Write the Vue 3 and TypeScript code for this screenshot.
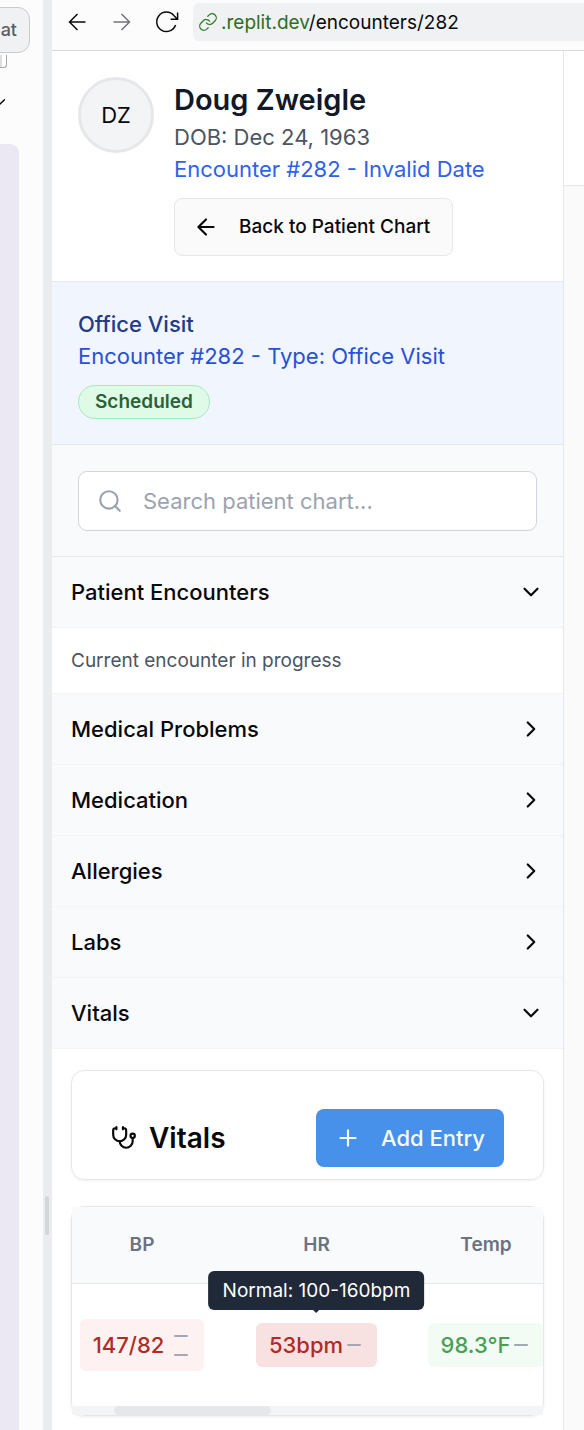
<script setup lang="ts">
import { ref } from 'vue'

interface Section {
  id: string
  title: string
  open: boolean
}

const query = ref('')
const sections = ref<Section[]>([
  { id: 'encounters', title: 'Patient Encounters', open: true },
  { id: 'problems', title: 'Medical Problems', open: false },
  { id: 'medication', title: 'Medication', open: false },
  { id: 'allergies', title: 'Allergies', open: false },
  { id: 'labs', title: 'Labs', open: false },
  { id: 'vitals', title: 'Vitals', open: true },
])

function toggle(section: Section) {
  section.open = !section.open
}
</script>

<template>
  <div class="workspace">
    <aside class="chat-pane">
      <button class="chat-tab" type="button">at</button>
      <span class="keycap"></span>
      <svg class="pane-chevron" viewBox="0 0 12 8">
        <path d="M1 1.500 5.500 6.500 11.500 0.800" />
      </svg>
      <div class="chat-bubble"></div>
    </aside>
    <div class="divider"><span class="grip"></span></div>

    <div class="preview">
      <header class="browser-bar">
        <button class="nav" type="button" aria-label="Back">
          <svg viewBox="0 0 24 24"><path d="M20.500 12H4.500M12.500 4l-8 8 8 8" /></svg>
        </button>
        <button class="nav muted" type="button" aria-label="Forward">
          <svg viewBox="0 0 24 24"><path d="M3.500 12h16M11.500 4l8 8-8 8" /></svg>
        </button>
        <button class="nav reload" type="button" aria-label="Reload">
          <svg viewBox="0 0 24 24"><path d="M20.600 15a9.700 9.700 0 1 1-1.800-9.500L22.200 9M22.600 2.500V9.300h-7" /></svg>
        </button>
        <div class="address">
          <svg viewBox="0 0 24 24">
            <path d="M10 13a5 5 0 0 0 7.540.540l3-3a5 5 0 0 0-7.070-7.070l-1.720 1.710" />
            <path d="M14 11a5 5 0 0 0-7.540-.540l-3 3a5 5 0 0 0 7.070 7.070l1.710-1.710" />
          </svg>
          <span class="url"><span class="host">.replit.dev</span>/encounters/282</span>
        </div>
      </header>

      <div class="app">
        <main class="chart">
          <section class="patient">
            <div class="avatar">DZ</div>
            <div class="patient-info">
              <h1>Doug Zweigle</h1>
              <p class="dob">DOB: Dec 24, 1963</p>
              <p class="encounter-date">Encounter #282 - Invalid Date</p>
              <button class="back" type="button">
                <svg viewBox="0 0 24 24"><path d="m12 19-7-7 7-7M19 12H5" /></svg>
                Back to Patient Chart
              </button>
            </div>
          </section>

          <section class="visit">
            <h2>Office Visit</h2>
            <p>Encounter #282 - Type: Office Visit</p>
            <span class="status">Scheduled</span>
          </section>

          <div class="search">
            <label class="search-box">
              <svg viewBox="0 0 24 24"><circle cx="11" cy="11" r="8" /><path d="m21 21-4.300-4.300" /></svg>
              <input v-model="query" type="text" aria-label="Search patient chart" placeholder="Search patient chart..." />
            </label>
          </div>

          <template v-for="section in sections" :key="section.id">
            <button class="section-head" type="button" :aria-expanded="section.open" @click="toggle(section)">
              {{ section.title }}
              <svg viewBox="0 0 24 24">
                <path :d="section.open ? 'm6 9 6 6 6-6' : 'm9 18 6-6-6-6'" />
              </svg>
            </button>
            <p v-if="section.open && section.id === 'encounters'" class="progress">Current encounter in progress</p>
            <div v-if="section.open && section.id === 'vitals'" class="vitals">
              <div class="vitals-card">
                <svg class="stethoscope" viewBox="0 0 24 24">
                  <path d="M11 2v2M5 2v2M5 3H4a2 2 0 0 0-2 2v4a6 6 0 0 0 12 0V5a2 2 0 0 0-2-2h-1" />
                  <path d="M8 15a6 6 0 0 0 12 0v-3" />
                  <circle cx="20" cy="10" r="2" />
                </svg>
                <h3>Vitals</h3>
                <button class="add" type="button">
                  <svg viewBox="0 0 24 24"><path d="M5 12h14M12 5v14" /></svg>
                  Add Entry
                </button>
              </div>

              <div class="table-card">
                <div class="table-scroll">
                  <table>
                    <colgroup>
                      <col class="col-bp" />
                      <col class="col-hr" />
                      <col class="col-temp" />
                    </colgroup>
                    <thead>
                      <tr>
                        <th>BP</th>
                        <th>HR</th>
                        <th>Temp</th>
                      </tr>
                    </thead>
                    <tbody>
                      <tr>
                        <td>
                          <span class="reading high tall">147/82 <span class="trends"><i></i><i></i></span></span>
                        </td>
                        <td>
                          <span class="reading alert">53bpm<i></i>
                            <span class="tooltip" role="tooltip">Normal: 100-160bpm</span>
                          </span>
                        </td>
                        <td><span class="reading ok">98.3°F<i></i></span></td>
                      </tr>
                    </tbody>
                  </table>
                  <div class="scrollbar"><span class="thumb"></span></div>
                </div>
              </div>
            </div>
          </template>
        </main>
        <div class="side">
          <div class="side-head"></div>
        </div>
      </div>
    </div>
  </div>
</template>

<style>
body {
  margin: 0;
}
</style>

<style scoped>
* {
  box-sizing: border-box;
}

.workspace {
  display: flex;
  min-height: 100vh;
  background: #fcfcfc;
  font-family: Inter, "Liberation Sans", sans-serif;
  font-size: 22px;
  line-height: 32px;
  color: #09090b;
  overflow: hidden;
}

h1,
h2,
h3,
p {
  margin: 0;
  font-size: inherit;
  font-weight: 400;
}

button {
  font: inherit;
  color: inherit;
  margin: 0;
  cursor: pointer;
}

svg {
  display: block;
  flex: none;
  fill: none;
  stroke: currentColor;
  stroke-width: 2;
  stroke-linecap: round;
  stroke-linejoin: round;
}

.chat-pane {
  width: 43px;
  flex: none;
  display: flex;
  flex-direction: column;
  align-items: flex-start;
  overflow: hidden;
}

.chat-tab {
  display: flex;
  justify-content: flex-end;
  align-items: center;
  align-self: flex-end;
  width: 80px;
  height: 46px;
  margin: 7px 13px 0 0;
  padding: 0 12px 0 0;
  border: 1px solid #c9cbcf;
  border-radius: 12px;
  background: #f0f1f3;
  color: #5a5d66;
  font-size: 18px;
  font-weight: 500;
}

.keycap {
  width: 7px;
  height: 13px;
  margin-top: 2px;
  border: solid #a5a7aa;
  border-width: 0 1px 1px 0;
  border-radius: 0 0 3px 0;
  background: linear-gradient(90deg, #dcdddf 2px, #fff 2px);
}

.pane-chevron {
  width: 12px;
  height: 8px;
  margin: 31px 0 0 -7px;
  stroke-width: 1.500;
}

.chat-bubble {
  flex: 1;
  width: 19px;
  margin-top: 37px;
  border-top-right-radius: 9px;
  background: #ebe8f4;
}

.divider {
  display: flex;
  flex-direction: column;
  width: 9px;
  flex: none;
  padding-top: 1196px;
  background: #ebeced;
}

.grip {
  width: 4px;
  height: 39px;
  margin-left: 2px;
  border-radius: 2px;
  background: #d5d6d8;
}

.preview {
  flex: 1;
  min-width: 0;
  display: flex;
  flex-direction: column;
}

.browser-bar {
  display: flex;
  align-items: flex-start;
  height: 51px;
  padding: 3px 0 0 13px;
  border-bottom: 1px solid #d9dadc;
}

.nav {
  display: grid;
  place-items: center;
  width: 24px;
  height: 38px;
  margin-right: 21px;
  padding: 0;
  border: 0;
  background: none;
}

.nav svg {
  width: 24px;
  height: 24px;
  stroke-width: 1.500;
  stroke-linecap: butt;
  stroke-linejoin: miter;
}

.nav.muted {
  color: #70737a;
}

.nav.reload {
  margin-right: 14px;
}

.address {
  display: flex;
  align-items: center;
  flex: 1;
  min-width: 0;
  height: 38px;
  padding-left: 5px;
  border-radius: 6px 0 0 6px;
  background: #f0f1f3;
  font-size: 19px;
  white-space: nowrap;
}

.address svg {
  width: 20px;
  height: 20px;
  margin-right: 3px;
  color: #317a2b;
  stroke-width: 1.500;
}

.url {
  padding-top: 2px;
}

.host {
  color: #2d6e1f;
}

.app {
  display: flex;
  flex: 1;
}

.chart {
  flex: 1;
  min-width: 0;
  background: #fff;
}

.side {
  width: 21px;
  flex: none;
  border-left: 1px solid #e5e7eb;
  background: #fafafa;
}

.side-head {
  height: 135px;
  border-bottom: 1px solid #e5e7eb;
  background: #fff;
}

.patient {
  display: flex;
  gap: 20px;
  padding: 26px 26px 25px;
  border-bottom: 1px solid #e5e7eb;
}

.avatar {
  display: grid;
  place-items: center;
  width: 76px;
  height: 76px;
  flex: none;
  border: 3px solid #e5e7eb;
  border-radius: 50%;
  background: #f3f4f6;
}

.patient-info {
  display: flex;
  flex-direction: column;
  align-items: flex-start;
  min-width: 0;
}

h1 {
  padding-top: 2px;
  font-size: 29px;
  line-height: 42px;
  font-weight: 600;
  color: #111827;
}

.dob {
  color: #4b5563;
}

.encounter-date {
  color: #2f61eb;
}

.back {
  display: flex;
  align-items: center;
  gap: 20px;
  height: 58px;
  margin-top: 13px;
  padding: 0 22px 0 18px;
  border: 1px solid #e5e7eb;
  border-radius: 8px;
  background: #fafafa;
  font-size: 19px;
  font-weight: 500;
}

.back svg,
.search svg,
.stethoscope,
.add svg,
.section-head svg {
  width: 26px;
  height: 26px;
}

.visit {
  padding: 26px 26px 25px;
  border-bottom: 1px solid #e5e7eb;
  background: #f0f5fe;
  color: #2850d6;
}

.visit h2 {
  font-weight: 500;
  color: #233a88;
}

.status {
  display: inline-block;
  margin-top: 13px;
  padding: 0 16px;
  border: 1px solid #a3ecbb;
  border-radius: 17px;
  background: #e0fae8;
  color: #2a6337;
  font-size: 19px;
  font-weight: 600;
  vertical-align: top;
}

.search {
  padding: 26px 26px 25px;
  border-bottom: 1px solid #e5e7eb;
  background: #f9fafb;
}

.search-box {
  display: flex;
  align-items: center;
  gap: 20px;
  height: 60px;
  padding: 0 18px;
  border: 1px solid #d1d5db;
  border-radius: 9px;
  background: #fff;
  color: #9ca3af;
}

input {
  flex: 1;
  min-width: 0;
  padding: 0;
  border: 0;
  outline: 0;
  background: none;
  font: inherit;
  color: #111827;
}

input::placeholder {
  color: #9ca3af;
  opacity: 1;
}

.section-head {
  display: flex;
  align-items: center;
  justify-content: space-between;
  width: 100%;
  height: 71px;
  padding: 0 19px;
  border: 0;
  border-bottom: 1px solid #f3f4f6;
  background: #f9fafc;
  font-weight: 500;
}

.progress {
  padding: 17px 19px 16px;
  border-bottom: 1px solid #f3f4f6;
  font-size: 19px;
  color: #4b5563;
}

.vitals {
  padding: 21px 19px 14px;
}

.vitals-card {
  display: flex;
  align-items: center;
  padding: 38px 39px 12px;
  border: 1px solid #e5e7eb;
  border-radius: 13px;
  box-shadow: 0 1px 3px rgba(0, 0, 0, 0.06);
}

h3 {
  margin: 0 auto 0 12px;
  font-size: 28px;
  font-weight: 600;
}

.add {
  display: flex;
  align-items: center;
  gap: 20px;
  height: 58px;
  padding: 0 19px;
  border: 0;
  border-radius: 8px;
  background: #4891eb;
  color: #f8fafc;
  font-weight: 500;
}

.table-card {
  margin-top: 26px;
  border: 1px solid #e5e7eb;
  border-radius: 13px;
  box-shadow: 0 1px 3px rgba(0, 0, 0, 0.08);
}

.table-scroll {
  overflow: hidden;
}

table {
  width: 479px;
  table-layout: fixed;
  border-collapse: separate;
  border-spacing: 0;
}

.col-bp {
  width: 140px;
}

.col-hr {
  width: 209px;
}

.col-temp {
  width: 130px;
}

th,
td {
  padding: 0;
  text-align: center;
}

th {
  height: 77px;
  border-bottom: 1px solid #e5e7eb;
  background: #f9fafb;
  color: #6b7280;
  font-size: 19px;
  font-weight: 600;
}

td {
  height: 122px;
}

.reading {
  position: relative;
  display: inline-flex;
  align-items: center;
  gap: 4px;
  height: 44px;
  padding: 0 16px 0 13px;
  border-radius: 6px;
  font-weight: 500;
  vertical-align: middle;
}

.reading i {
  width: 14px;
  height: 2px;
  border-radius: 1px;
  background: #a3a8b4;
}

.high {
  background: #fdf2f1;
  color: #b02b24;
}

.alert {
  background: #f8e2e1;
  color: #b02b24;
}

.ok {
  background: #f2fcf5;
  color: #47a053;
}

.tall {
  gap: 10px;
  height: 52px;
}

.trends {
  display: flex;
  flex-direction: column;
  gap: 17px;
}

.tooltip {
  position: absolute;
  left: 50%;
  bottom: 57px;
  transform: translateX(-50%);
  padding: 4px 14px 3px;
  border-radius: 6px;
  background: #1f2937;
  color: #fff;
  font-size: 19px;
  font-weight: 400;
  white-space: nowrap;
}

.tooltip::after {
  content: "";
  position: absolute;
  left: 50%;
  top: 100%;
  margin-left: -3px;
  border: 3px solid transparent;
  border-top-color: #1f2937;
  border-bottom: 0;
}

.scrollbar {
  height: 9px;
  padding-left: 42px;
  background: #f3f4f6;
}

.thumb {
  display: block;
  width: 157px;
  height: 9px;
  border-radius: 5px;
  background: #e5e7eb;
}
</style>
